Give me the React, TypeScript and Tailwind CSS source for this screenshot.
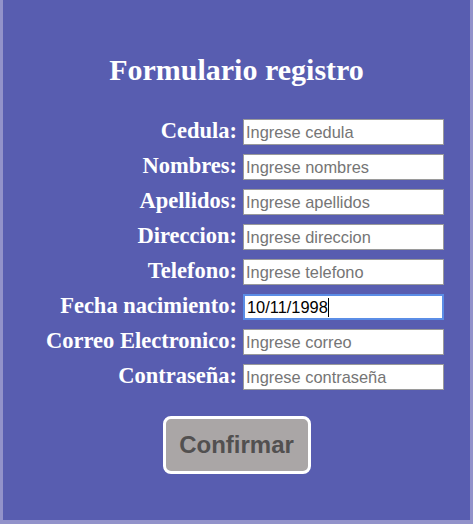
import React from "react";

const rows: { label: string; placeholder: string; value?: string }[] = [
  { label: "Cedula:", placeholder: "Ingrese cedula" },
  { label: "Nombres:", placeholder: "Ingrese nombres" },
  { label: "Apellidos:", placeholder: "Ingrese apellidos" },
  { label: "Direccion:", placeholder: "Ingrese direccion" },
  { label: "Telefono:", placeholder: "Ingrese telefono" },
  { label: "Fecha nacimiento:", placeholder: "", value: "10/11/1998" },
  { label: "Correo Electronico:", placeholder: "Ingrese correo" },
  { label: "Contraseña:", placeholder: "Ingrese contraseña" },
];

export default function App() {
  return (
    <div className="w-[473px] h-[524px] bg-[#9292ca] pl-[3px] overflow-hidden">
      <div className="w-[467px] h-[520px] bg-[#585db0] pt-[55px] flex flex-col items-center">
        <h1
          className="text-[30px] leading-none font-bold text-white text-center w-full"
          style={{ fontFamily: '"Liberation Serif", "Times New Roman", serif' }}
        >
          Formulario registro
        </h1>
        <div className="mt-[34px] flex flex-col gap-[9px] w-full">
          {rows.map((r) => (
            <div key={r.label} className="flex items-baseline">
              <label
                className="w-[234px] text-right text-[22.5px] font-bold text-white leading-none whitespace-nowrap"
                style={{ fontFamily: '"Liberation Serif", "Times New Roman", serif' }}
              >
                {r.label}
              </label>
              <div className="relative ml-[6px]">
                {r.value ? (
                  <>
                    <input
                      readOnly
                      value={r.value}
                      className="w-[201px] h-[26px] bg-white border-2 border-[#5b8de6] px-[2px] text-[16.4px] text-black outline-none"
                      style={{ fontFamily: '"Liberation Sans", Arial, sans-serif' }}
                    />
                    <span className="absolute left-[85px] top-[4px] w-[1px] h-[19px] bg-black" />
                  </>
                ) : (
                  <input
                    readOnly
                    placeholder={r.placeholder}
                    className="w-[201px] h-[26px] bg-white border border-[#9a9a9a] px-[2px] text-[16.4px] text-black placeholder:text-[#757575] outline-none"
                    style={{ fontFamily: '"Liberation Sans", Arial, sans-serif' }}
                  />
                )}
              </div>
            </div>
          ))}
        </div>
        <button
          className="mt-[26px] w-[148px] h-[58px] rounded-[8px] border-[3px] border-white bg-[#aaa6a6] text-[24px] font-bold text-[#525050]"
          style={{ fontFamily: '"Liberation Sans", Arial, sans-serif' }}
        >
          Confirmar
        </button>
      </div>
    </div>
  );
}
